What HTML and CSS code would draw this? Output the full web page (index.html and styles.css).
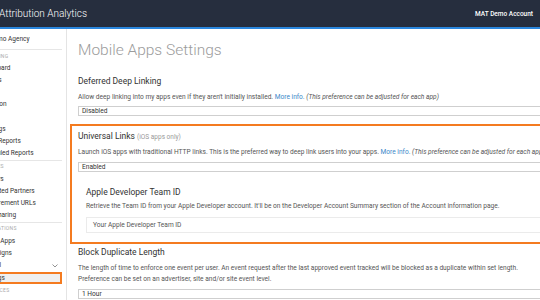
FILE: index.html
```html
<!DOCTYPE html>
<html lang="en">
<head>
  <meta charset="UTF-8" />
  <title>Mobile Apps Settings</title>
  <meta name="viewport" content="width=device-width, initial-scale=1.0" />
  <link rel="stylesheet" href="styles.css">
</head>
<body>
  <header class="topbar">
    <div class="brand">Attribution Analytics</div>
    <div class="account">MAT Demo Account</div>
  </header>

  <div class="layout">
    <aside class="sidebar">
      <ul class="nav">
        <li class="nav-item agency">My Demo Agency</li>
        <li class="nav-sep first"></li>
        <li class="nav-label">Reporting</li>
        <li class="nav-item">Dashboard</li>
        <li class="nav-item">Reports</li>
        <li class="nav-item">LTV</li>
        <li class="nav-item">Retention</li>
        <li class="nav-item">Logs</li>
        <li class="nav-item">Rankings</li>
        <li class="nav-item">Saved Reports</li>
        <li class="nav-item">Scheduled Reports</li>
        <li class="nav-sep"></li>
        <li class="nav-label">Services</li>
        <li class="nav-item">Partners</li>
        <li class="nav-item">Integrated Partners</li>
        <li class="nav-item">Measurement URLs</li>
        <li class="nav-item">Data Sharing</li>
        <li class="nav-sep"></li>
        <li class="nav-label">Applications</li>
        <li class="nav-item">Mobile Apps</li>
        <li class="nav-item">Campaigns</li>
        <li class="nav-item nav-select">General
          <svg class="chev" width="6" height="4" viewBox="0 0 6 4"><path d="M0.5 0.5 L3 3 L5.5 0.5" fill="none" stroke="#777" stroke-width="0.8"/></svg>
        </li>
        <li class="nav-item active">Settings</li>
        <li class="nav-label">Resources</li>
      </ul>
    </aside>

    <main class="content">
      <h1 class="page-title">Mobile Apps Settings</h1>

      <section class="setting">
        <h3>Deferred Deep Linking</h3>
        <p class="help">Allow deep linking into my apps even if they aren't initially installed. <a href="#">More info.</a> <em>(This preference can be adjusted for each app)</em></p>
        <div class="select">Disabled</div>
      </section>

      <section class="setting highlight">
        <h3>Universal Links <span class="note">(iOS apps only)</span></h3>
        <p class="help">Launch iOS apps with traditional HTTP links. This is the preferred way to deep link users into your apps. <a href="#">More info.</a> <em>(This preference can be adjusted for each app)</em></p>
        <div class="select">Enabled</div>

        <div class="subsetting">
          <h3>Apple Developer Team ID</h3>
          <p class="help">Retrieve the Team ID from your Apple Developer account. It'll be on the Developer Account Summary section of the Account information page.</p>
          <div class="input">Your Apple Developer Team ID</div>
        </div>
      </section>

      <section class="setting">
        <h3>Block Duplicate Length</h3>
        <p class="help two-line">The length of time to enforce one event per user. An event request after the last approved event tracked will be blocked as a duplicate within set length.<br>Preference can be set on an advertiser, site and/or site event level.</p>
        <div class="select">1 Hour</div>
      </section>
    </main>
  </div>
</body>
</html>
```

FILE: styles.css
```css
* {
  box-sizing: border-box;
}
body {
  font-family: Roboto, "Liberation Sans", sans-serif;
  margin: 0;
  width: 540px;
  height: 300px;
  overflow: hidden;
  color: #333;
  background: #fff;
}
.topbar {
  height: 29px;
  background: #262e3e;
  border-bottom: 2px solid #2b87de;
  display: flex;
  align-items: center;
  justify-content: space-between;
  padding: 0 7px 0 0;
}
.brand {
  color: #fff;
  font-size: 10px;
  font-weight: 300;
  margin-left: -1px;
}
.account {
  color: #fff;
  font-size: 6.5px;
  font-weight: 500;
}
.layout {
  display: flex;
  height: 271px;
}
.sidebar {
  flex: none;
  width: 67px;
  border-right: 1px solid #e4e4e4;
  overflow: hidden;
  padding-top: 3.5px;
}
.nav {
  list-style: none;
  margin: 0 4px 0 -21px;
  padding: 0;
  font-size: 6.5px;
}
.nav-item {
  line-height: 12.15px;
  white-space: nowrap;
  position: relative;
}
.nav-item.agency {
  line-height: 12px;
}
.nav-sep {
  height: 1px;
  background: #e6e6e6;
  margin: 0.5px 0 1.5px;
}
.nav-sep.first {
  margin-top: 4.5px;
}
.nav-label {
  font-size: 5px;
  line-height: 8px;
  color: #aaa;
  text-transform: uppercase;
  letter-spacing: 0.3px;
  margin-bottom: 2.5px;
}
.nav-select .chev {
  position: absolute;
  right: 4px;
  top: 4.5px;
}
.nav-item.active {
  background: #efefef;
  border: 2px solid #f47b20;
  line-height: 8px;
  margin: 1px 0 0;
}
.nav-item.active + .nav-label {
  margin-top: 2px;
}
.content {
  flex: none;
  width: 580px;
  padding: 11px 0 0 11px;
}
.page-title {
  margin: 0;
  font-size: 15.5px;
  font-weight: 300;
  line-height: 20px;
  color: #9c9c9c;
}
.setting h3,
.subsetting h3 {
  margin: 0;
  font-size: 8.5px;
  font-weight: 400;
  line-height: 13px;
  color: #333;
}
.setting {
  margin-top: 14.5px;
}
.help {
  margin: 4px 0 4.5px;
  font-size: 6.6px;
  line-height: 10px;
  color: #555;
  white-space: nowrap;
}
.help.two-line {
  line-height: 11px;
  margin: 3.5px 0 4px;
}
.help a {
  color: #3a87c8;
  text-decoration: none;
}
.help em {
  color: #555;
}
.select {
  height: 10px;
  border: 1px solid #cfcfcf;
  font-size: 6.6px;
  line-height: 8px;
  padding-left: 3px;
  color: #333;
  background: #fff;
}
.highlight {
  margin: 8px 0 0 -8px;
  border: 2px solid #f47b20;
  padding: 4px 0 9.5px 6px;
}
.highlight .help {
  margin: 2.5px 0 5px;
}
.note {
  font-size: 6.5px;
  color: #999;
}
.subsetting {
  margin-top: 14px;
  padding-left: 8px;
}
.subsetting .help {
  margin: 2.5px 0 5.5px;
}
.input {
  height: 16px;
  border: 1px solid #ebebeb;
  font-size: 6.6px;
  line-height: 14px;
  padding-left: 6px;
  color: #555;
}
.highlight + .setting {
  margin-top: 2px;
}
```
